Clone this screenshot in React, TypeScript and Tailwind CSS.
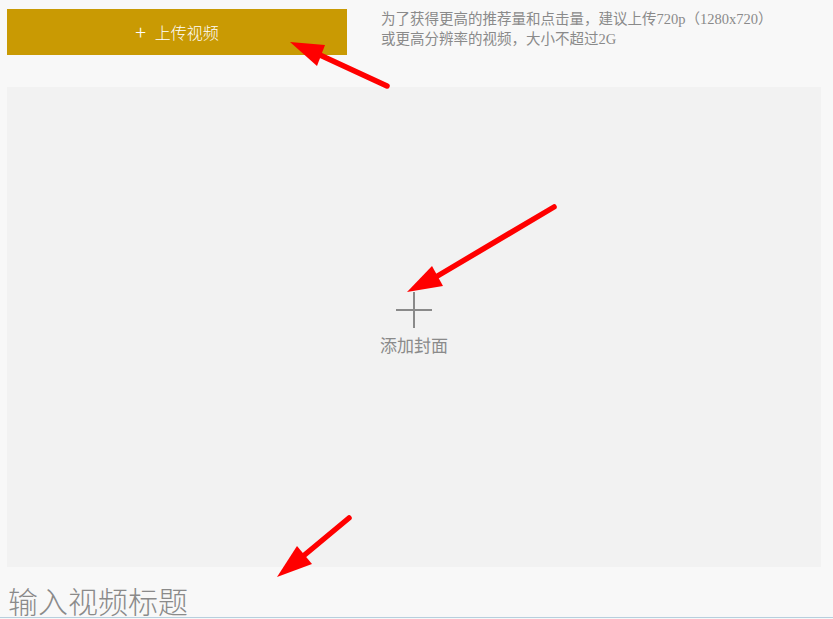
const cjk = { fontFamily: '"Noto Sans CJK SC", "Noto Sans", sans-serif' };
const hint = { fontFamily: '"Liberation Serif", "Noto Sans CJK SC", serif' };

function Arrow({ tail, tip, head }: { tail: [number, number]; tip: [number, number]; head: [number, number][] }) {
  const pts = [tip, ...head].map((p) => p.join(",")).join(" ");
  return (
    <>
      <line x1={tail[0]} y1={tail[1]} x2={(head[0][0] + head[1][0]) / 2} y2={(head[0][1] + head[1][1]) / 2} stroke="#ff0000" strokeWidth={5.5} strokeLinecap="round" />
      <polygon points={pts} fill="#ff0000" />
    </>
  );
}

export default function App() {
  return (
    <div className="relative h-[619px] w-full overflow-hidden bg-[#f8f8f8]">
      <div className="flex pl-[7px] pt-[9px]">
        <button
          type="button"
          className="flex h-[46px] w-[340px] items-center justify-center gap-[9px] bg-[#c99a03] text-[16px] font-light text-white"
          style={cjk}
        >
          <span className="text-[20px] font-light leading-none">+</span>
          <span>上传视频</span>
        </button>
        <p className="ml-[34px] text-[14.5px] leading-[20px] text-[#8a8a8a]" style={hint}>
          为了获得更高的推荐量和点击量，建议上传720p（1280x720）
          <br />
          或更高分辨率的视频，大小不超过2G
        </p>
      </div>

      <div className="ml-[7px] mt-[32px] flex h-[480px] w-[814px] flex-col items-center justify-center bg-[#f2f2f2]">
        <div className="relative mt-[-4px] h-[36px] w-[36px]">
          <span className="absolute left-0 top-[17px] h-[2px] w-[36px] bg-[#8a8a8a]" />
          <span className="absolute left-[17px] top-0 h-[36px] w-[2px] bg-[#8a8a8a]" />
        </div>
        <span className="mt-[4px] text-[17px] text-[#8a8a8a]" style={cjk}>
          添加封面
        </span>
      </div>

      <input
        type="text"
        placeholder="输入视频标题"
        className="block h-[51px] w-full border-b border-[#b7cfde] bg-transparent pl-[8px] pt-[16px] text-[30px] font-light text-[#666] outline-none placeholder:text-[#8a8a8a]"
        style={cjk}
      />

      <svg className="pointer-events-none absolute left-0 top-0" width="833" height="619">
        <Arrow tail={[387, 86]} tip={[290, 42]} head={[[325, 45], [317, 66]]} />
        <Arrow tail={[554, 207]} tip={[407, 292]} head={[[432, 266], [443, 286]]} />
        <Arrow tail={[349, 518]} tip={[277, 577]} head={[[297, 546], [312, 564]]} />
      </svg>
    </div>
  );
}
